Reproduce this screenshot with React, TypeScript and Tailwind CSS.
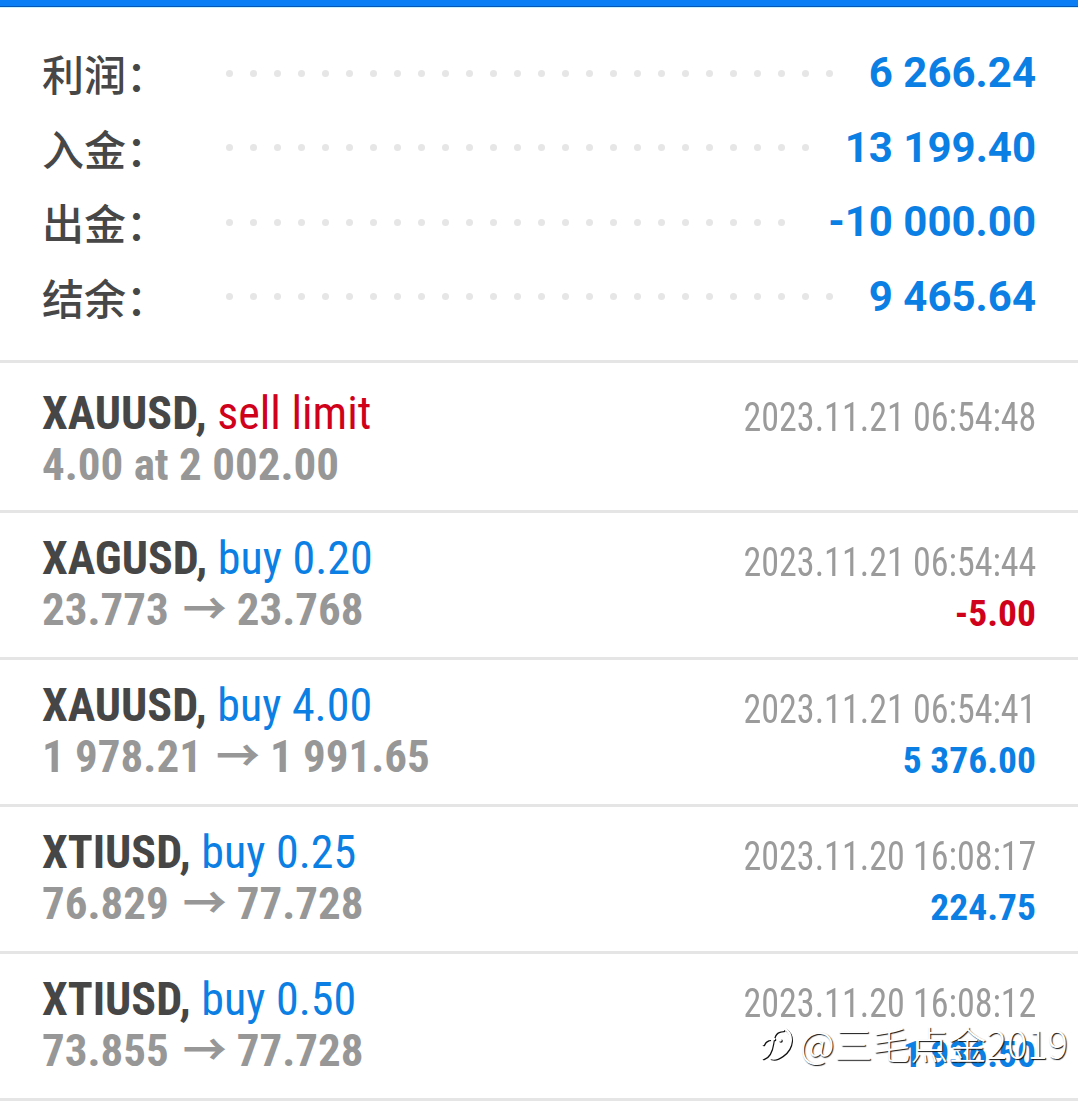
import React from "react";

const summary = [
  { label: "利润：", value: "6 266.24" },
  { label: "入金：", value: "13 199.40" },
  { label: "出金：", value: "-10 000.00" },
  { label: "结余：", value: "9 465.64" },
];

type Trade = {
  sym: string;
  action: string;
  actionColor: "red" | "blue";
  from: string;
  to?: string;
  time: string;
  profit?: string;
  profitColor?: "red" | "blue";
};

const trades: Trade[] = [
  { sym: "XAUUSD,", action: "sell limit", actionColor: "red", from: "4.00 at 2 002.00", time: "2023.11.21 06:54:48" },
  { sym: "XAGUSD,", action: "buy 0.20", actionColor: "blue", from: "23.773", to: "23.768", time: "2023.11.21 06:54:44", profit: "-5.00", profitColor: "red" },
  { sym: "XAUUSD,", action: "buy 4.00", actionColor: "blue", from: "1 978.21", to: "1 991.65", time: "2023.11.21 06:54:41", profit: "5 376.00", profitColor: "blue" },
  { sym: "XTIUSD,", action: "buy 0.25", actionColor: "blue", from: "76.829", to: "77.728", time: "2023.11.20 16:08:17", profit: "224.75", profitColor: "blue" },
  { sym: "XTIUSD,", action: "buy 0.50", actionColor: "blue", from: "73.855", to: "77.728", time: "2023.11.20 16:08:12", profit: "1 936.50", profitColor: "blue" },
];

function Dots() {
  return (
    <div className="flex-1 h-[7px] overflow-hidden flex flex-wrap gap-x-[17px] gap-y-[20px] mr-[30px]">
      {Array.from({ length: 40 }).map((_, i) => (
        <span key={i} className="block w-[7px] h-[7px] rounded-full bg-[#e6e6e6]" />
      ))}
    </div>
  );
}

const cond = "font-['Roboto_Condensed','Liberation_Sans_Narrow','Roboto',sans-serif] [font-stretch:80%]";

export default function App() {
  return (
    <div className="relative w-full min-h-[1106px] bg-white overflow-hidden font-['Roboto','Noto_Sans_CJK_SC',sans-serif]">
      {/* top bar */}
      <div className="h-[7px] bg-[#0a7ff5] border-b border-[#0657b5]" />
      <div className="h-[1px] bg-[#c4f2ff]" />

      {/* summary */}
      <div className="pt-[28px] pb-[26px] px-[42px]">
        {summary.map((s) => (
          <div key={s.label} className="h-[74.5px] flex items-center">
            <div className="w-[184px] text-[42px] leading-none font-medium text-[#474747] font-['Noto_Sans_CJK_SC',sans-serif]">
              {s.label}
            </div>
            <Dots />
            <div className="text-[42px] leading-none font-bold text-[#0b7fe3]">{s.value}</div>
          </div>
        ))}
      </div>

      {/* trades */}
      <div className="border-t-[3px] border-[#e5e5e5]">
        {trades.map((t, i) => (
          <div
            key={i}
            className={`${i === 0 ? "h-[150px] pt-[5px]" : "h-[147px]"} border-b-[3px] border-[#e5e5e5] px-[42px] flex justify-between`}
          >
            <div className={`${cond} pt-[19px]`}>
              <div className="text-[46px] leading-[52px] whitespace-nowrap">
                <span className="font-bold text-[#464646]">{t.sym}</span>{" "}
                <span className={t.actionColor === "red" ? "text-[#d0021b]" : "text-[#0b7fe3]"}>{t.action}</span>
              </div>
              <div className="h-[52px] text-[45px] leading-[52px] font-bold text-[#979797] whitespace-nowrap">
                {t.from}
                {t.to && (
                  <>
                    <span className="inline-block w-[14px]" />
                    <span className="font-['Noto_Sans_CJK_SC',sans-serif] font-bold text-[44px] leading-none">→</span>
                    <span className="inline-block w-[10px]" />
                    {t.to}
                  </>
                )}
              </div>
            </div>
            <div className={`${cond} pt-[25px] flex flex-col items-end`}>
              <div className="text-[40px] leading-[50px] text-[#9b9b9b] whitespace-nowrap scale-x-[0.9] origin-right">
                {t.time}
              </div>
              {t.profit && (
                <div
                  className={`text-[37.5px] leading-[50px] font-bold whitespace-nowrap ${
                    t.profitColor === "red" ? "text-[#d0021b]" : "text-[#0b7fe3]"
                  }`}
                >
                  {t.profit}
                </div>
              )}
            </div>
          </div>
        ))}
      </div>

      {/* watermark */}
      <div className="absolute left-[760px] top-[1024px] flex items-center gap-[6px] text-white">
        <svg width="34" height="36" viewBox="0 0 34 36" className="drop-shadow-[1px_1px_0_#111]">
          <g fill="none" stroke="#fff" strokeWidth="2.6" strokeLinecap="round">
            <path d="M3 33 C9 31 11 25 12 18 C13 9 16 5 23 5" />
            <path d="M3 19 C5 14 9 13 14 14" />
            <path d="M25 4 C33 9 33 22 22 30 C18 33 14 34 11 33" />
          </g>
          <circle cx="20" cy="15" r="1.8" fill="#fff" />
        </svg>
        <span className="text-[38px] leading-none font-light font-['Noto_Sans_CJK_SC',sans-serif] [text-shadow:1px_1px_1px_#111]">
          @三毛点金2019
        </span>
      </div>
    </div>
  );
}
